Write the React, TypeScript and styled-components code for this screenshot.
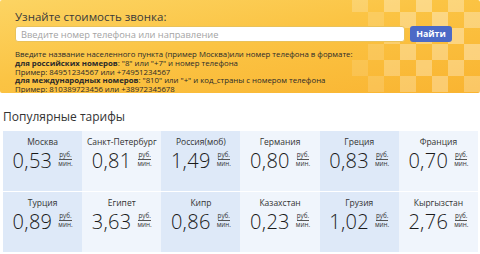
import styled, { createGlobalStyle } from 'styled-components';

const GlobalStyle = createGlobalStyle`
    body {
        margin: 0;
        background: #ffffff;
        font-family: "Open Sans", "Noto Sans", sans-serif;
        color: #222;
    }
`;

const Page = styled.div`
    width: 480px;
    height: 254px;
    overflow: hidden;
`;

const Banner = styled.div`
    position: relative;
    height: 93px;
    padding: 9px 15px 0 15px;
    box-sizing: border-box;
    background: linear-gradient(170deg, #fcd463 0%, #fbc444 45%, #f9b431 100%);
    border-radius: 2px;
    overflow: hidden;
`;

const Pattern = styled.svg`
    position: absolute;
    right: 0;
    top: 0;
    pointer-events: none;
`;

const BannerContent = styled.div`
    position: relative;
`;

const BannerTitle = styled.div`
    font-size: 11.5px;
    line-height: 15px;
    color: #3a3a3a;
`;

const SearchRow = styled.div`
    display: flex;
    align-items: center;
    gap: 5px;
    margin-top: 2px;
`;

const SearchInput = styled.input`
    width: 390px;
    height: 16px;
    box-sizing: border-box;
    border: 1px solid #e9c25a;
    border-radius: 3px;
    background: #fff;
    padding: 0 5px;
    font-family: "Open Sans", sans-serif;
    font-size: 9.3px;
    outline: none;
    &::placeholder { color: #a3a3a3; }
`;

const FindButton = styled.button`
    width: 42px;
    height: 16px;
    border: none;
    border-radius: 3px;
    background: #4c6ac6;
    color: #fff;
    font-family: "Open Sans", sans-serif;
    font-weight: 700;
    font-size: 8.8px;
    padding: 0;
`;

const Hint = styled.div`
    margin-top: 8px;
    font-size: 7.8px;
    line-height: 8.8px;
    color: #2a2a2a;
    b { font-weight: 700; }
`;

const SectionTitle = styled.div`
    margin: 15px 0 0 3px;
    font-size: 12px;
    line-height: 18px;
    color: #333;
`;

const Grid = styled.div`
    display: grid;
    grid-template-columns: repeat(6, 1fr);
    row-gap: 1px;
    margin: 5px 2px 0 3px;
`;

const Cell = styled.div<{ $tone: boolean }>`
    height: 60px;
    background: ${p => (p.$tone ? '#dee9f8' : '#f0f5fc')};
    display: flex;
    flex-direction: column;
    align-items: center;
    padding-top: 5px;
    box-sizing: border-box;
`;

const City = styled.div`
    font-size: 8.5px;
    line-height: 12px;
    color: #333;
`;

const PriceRow = styled.div`
    display: flex;
    align-items: center;
    gap: 6px;
    margin-top: 1px;
`;

const Price = styled.div`
    font-size: 20px;
    line-height: 24px;
    font-weight: 300;
    color: #1a1a1a;
    letter-spacing: 0.3px;
`;

const Unit = styled.div`
    display: flex;
    flex-direction: column;
    align-items: center;
    font-size: 6.3px;
    line-height: 6.5px;
    color: #333;
    margin-top: -2px;
    span:first-child { border-bottom: 0.5px solid #555; padding-bottom: 0.5px; }
    span:last-child { padding-top: 1px; }
`;

const tariffs = [
    ['Москва', '0,53'], ['Санкт-Петербург', '0,81'], ['Россия(моб)', '1,49'],
    ['Германия', '0,80'], ['Греция', '0,83'], ['Франция', '0,70'],
    ['Турция', '0,89'], ['Египет', '3,63'], ['Кипр', '0,86'],
    ['Казахстан', '0,23'], ['Грузия', '1,02'], ['Кыргызстан', '2,76'],
];

// светлые клетки на правой части баннера
const squares: [number, number, number][] = [
    [0, 0, 0.2], [2, 0, 0.3], [4, 0, 0.35], [6, 0, 0.3],
    [1, 1, 0.15], [3, 1, 0.3], [5, 1, 0.35], [7, 1, 0.3],
    [2, 2, 0.25], [4, 2, 0.3], [6, 2, 0.35],
    [1, 3, 0.15], [3, 3, 0.3], [5, 3, 0.3], [7, 3, 0.35],
    [0, 4, 0.12], [2, 4, 0.25], [4, 4, 0.3], [6, 4, 0.3],
    [1, 5, 0.15], [3, 5, 0.25], [5, 5, 0.3], [7, 5, 0.25],
];

function App() {
    return (
        <Page>
            <GlobalStyle />
            <Banner>
                <Pattern width="128" height="93" viewBox="0 0 128 93">
                    {squares.map(([x, y, o], i) => (
                        <rect key={i} x={x * 16} y={y * 16 - 4} width="16" height="16" fill="#fff" opacity={o} />
                    ))}
                </Pattern>
                <BannerContent>
                    <BannerTitle>Узнайте стоимость звонка:</BannerTitle>
                    <SearchRow>
                        <SearchInput placeholder="Введите номер телефона или направление" />
                        <FindButton>Найти</FindButton>
                    </SearchRow>
                    <Hint>
                        Введите название населенного пункта (пример Москва)или номер телефона в формате:<br />
                        <b>для российских номеров</b>: "8" или "+7" и номер телефона<br />
                        Пример: 84951234567 или +74951234567<br />
                        <b>для международных номеров</b>: "810" или "+" и код_страны с номером телефона<br />
                        Пример: 810389723456 или +38972345678
                    </Hint>
                </BannerContent>
            </Banner>
            <SectionTitle>Популярные тарифы</SectionTitle>
            <Grid>
                {tariffs.map(([city, price], i) => (
                    <Cell key={city} $tone={i % 2 === 0}>
                        <City>{city}</City>
                        <PriceRow>
                            <Price>{price}</Price>
                            <Unit><span>руб.</span><span>мин.</span></Unit>
                        </PriceRow>
                    </Cell>
                ))}
            </Grid>
        </Page>
    );
}

export default App;
